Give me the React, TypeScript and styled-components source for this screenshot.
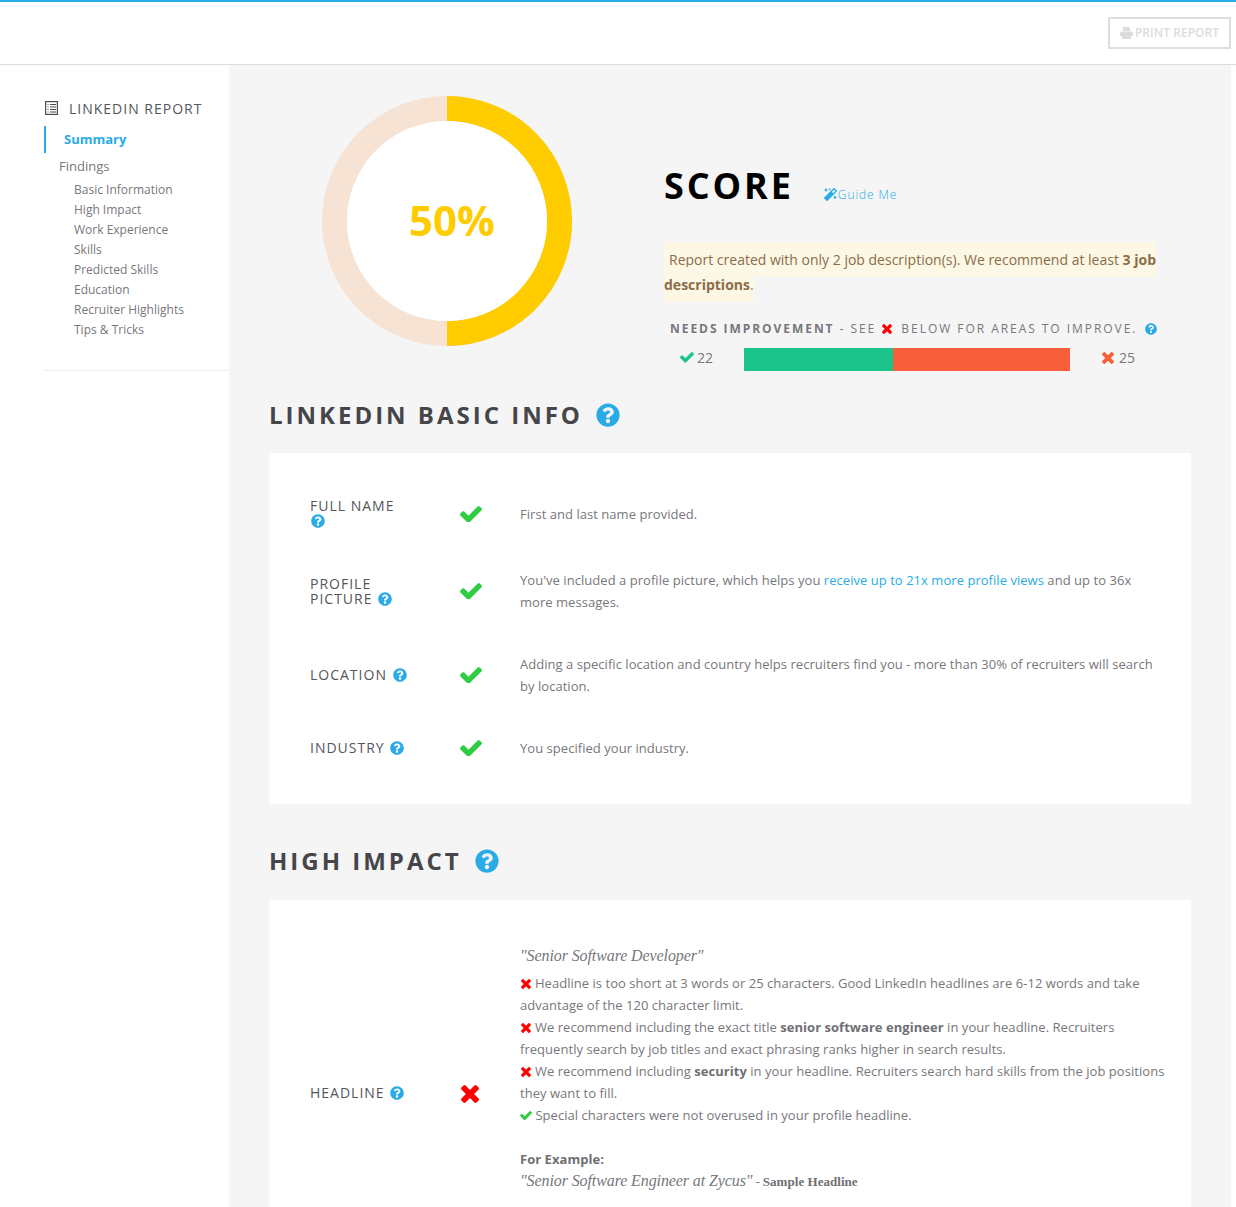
import React from "react";
import styled, { createGlobalStyle } from "styled-components";
import { FaQuestionCircle, FaMagic } from "react-icons/fa";

const GlobalStyle = createGlobalStyle`
  html, body {
    margin: 0;
    padding: 0;
    background: #fff;
  }
  body {
    font-family: "Open Sans", "Liberation Sans", sans-serif;
    color: #6f6f74;
  }
  * {
    box-sizing: border-box;
  }
`;

const Page = styled.div`
  width: 1236px;
  height: 1207px;
  overflow: hidden;
  border-top: 2px solid #29abe8;
`;

const TopBar = styled.div`
  height: 63px;
  border-bottom: 1px solid #dcdcdc;
  display: flex;
  justify-content: flex-end;
  align-items: flex-start;
  padding: 15px 5px 0 0;
`;

const PrintButton = styled.button`
  width: 123px;
  height: 32px;
  border: 2px solid #dedede;
  background: #fff;
  color: #dcdcdc;
  font-family: inherit;
  font-size: 12px;
  font-weight: 600;
  letter-spacing: 0.05px;
  display: flex;
  align-items: center;
  justify-content: center;
  gap: 2px;
  padding: 0 0 1px;
`;

const Body = styled.div`
  display: flex;
  width: 1236px;
`;

const Sidebar = styled.aside`
  width: 229px;
  flex: none;
  padding: 33px 0 0 44px;
`;

const SideTitle = styled.div`
  display: flex;
  align-items: center;
  gap: 11px;
  font-size: 14px;
  letter-spacing: 1px;
  color: #55555a;
  height: 20px;
  padding-left: 1px;
`;

const SideActive = styled.div`
  margin-top: 8px;
  height: 27px;
  border-left: 2px solid #29abe8;
  padding-left: 18px;
  font-size: 13px;
  font-weight: 700;
  color: #29abe8;
  line-height: 27px;
`;

const SideGroup = styled.div`
  margin-top: 3px;
  padding-left: 15px;
  font-size: 13px;
  line-height: 20px;
  color: #77777c;
`;

const SideList = styled.ul`
  list-style: none;
  margin: 4px 0 0;
  padding: 0 0 0 30px;
`;

const SideItem = styled.li`
  font-size: 12px;
  line-height: 20px;
  color: #77777c;
`;

const SideRule = styled.div`
  margin-top: 30px;
  border-top: 1px solid #eeeeee;
`;

const Main = styled.main`
  width: 1002px;
  flex: none;
  height: 1142px;
  overflow: hidden;
  background: #f5f5f5;
  padding: 31px 40px 0 40px;
`;

const ScoreRow = styled.section`
  display: flex;
  height: 304px;
`;

const Donut = styled.div`
  position: relative;
  width: 250px;
  height: 250px;
  margin-left: 53px;
  flex: none;
`;

const DonutLabel = styled.div`
  position: absolute;
  left: 5px;
  right: -5px;
  top: -1px;
  height: 250px;
  line-height: 250px;
  text-align: center;
  font-size: 42px;
  font-weight: 700;
  color: #ffcc00;
`;

const ScoreInfo = styled.div`
  margin-left: 92px;
  width: 495px;
`;

const ScoreHead = styled.div`
  display: flex;
  align-items: flex-end;
  margin-top: 65px;
`;

const ScoreTitle = styled.h2`
  margin: 0;
  font-size: 36px;
  line-height: 50px;
  font-weight: 700;
  letter-spacing: 2.9px;
  color: #000;
`;

const GuideLink = styled.a`
  margin: 0 0 8px 30px;
  font-size: 12px;
  font-weight: 300;
  letter-spacing: 0.9px;
  color: #29abe8;
  display: inline-flex;
  align-items: center;
  gap: 1px;
`;

const Notice = styled.p`
  margin: 36px 0 0;
  width: 494px;
  font-size: 14px;
  line-height: 25px;
  color: #8b6d47;
`;

const NoticeText = styled.span`
  background: #fdf7e6;
  padding: 8px 0;
`;

const NoticeLead = styled.span`
  display: inline-block;
  width: 5px;
`;

const NeedsLine = styled.div`
  margin-top: 22px;
  padding-left: 6px;
  font-size: 12px;
  line-height: 20px;
  letter-spacing: 1.95px;
  white-space: nowrap;
  color: #77777c;
  display: flex;
  align-items: center;
  b {
    font-weight: 700;
    letter-spacing: 1.95px;
  }
`;

const BarRow = styled.div`
  display: flex;
  align-items: center;
  margin-top: 9px;
  height: 23px;
`;

const BarCount = styled.div<{ $width: number; $pad: number; $gap: number }>`
  width: ${(p) => p.$width}px;
  padding: 0 0 4px ${(p) => p.$pad}px;
  font-size: 14px;
  color: #77777c;
  display: flex;
  align-items: center;
  gap: ${(p) => p.$gap}px;
  flex: none;
`;

const Bar = styled.div`
  display: flex;
  width: 326px;
  height: 23px;
  flex: none;
`;

const BarPart = styled.div<{ $color: string; $width: number }>`
  width: ${(p) => p.$width}px;
  background: ${(p) => p.$color};
`;

const SectionHead = styled.h3<{ $top: number }>`
  margin: ${(p) => p.$top}px 0 0;
  padding-bottom: 2px;
  display: flex;
  align-items: center;
  gap: 13px;
  font-size: 24px;
  line-height: 30px;
  font-weight: 700;
  letter-spacing: 3px;
  color: #45454a;
`;

const Card = styled.div<{ $gap: number; $top: number }>`
  margin-top: ${(p) => p.$gap}px;
  width: 922px;
  background: #fff;
  padding: ${(p) => p.$top}px 0 29px 41px;
`;

const Row = styled.div<{ $height: number }>`
  display: flex;
  align-items: center;
  height: ${(p) => p.$height}px;
`;

const RowLabel = styled.div<{ $lift?: number }>`
  width: 150px;
  flex: none;
  padding-bottom: ${(p) => p.$lift ?? 0}px;
  font-size: 14px;
  line-height: 15px;
  letter-spacing: 1px;
  color: #55555a;
  svg {
    vertical-align: -2px;
    margin-left: 1px;
  }
`;

const RowMark = styled.div<{ $pad?: number; $drop?: number }>`
  width: 60px;
  flex: none;
  display: flex;
  padding: ${(p) => p.$drop ?? 0}px 0 0 ${(p) => p.$pad ?? 0}px;
`;

const RowText = styled.div`
  flex: 1;
  padding-right: 25px;
  font-size: 13px;
  line-height: 22px;
  letter-spacing: 0.04px;
  color: #77777c;
  a {
    color: #29abe8;
  }
  b {
    font-weight: 700;
    color: #6f6f74;
  }
`;

const TopRowText = styled(RowText)`
  align-self: flex-start;
`;

const Quote = styled.div`
  font-family: "Liberation Serif", serif;
  font-style: italic;
  font-size: 16px;
  line-height: 22px;
  letter-spacing: -0.1px;
  color: #77777c;
  margin-bottom: 5px;
`;

const ExampleLine = styled.div`
  display: flex;
  align-items: baseline;
  gap: 3px;
  font-family: "Liberation Serif", serif;
  font-size: 13px;
  line-height: 22px;
  i {
    font-size: 16px;
    letter-spacing: -0.1px;
  }
  b {
    font-family: "Liberation Serif", serif;
  }
`;

const Spacer = styled.div`
  height: 22px;
`;

const InlineMark = styled.svg<{ $left?: number; $right?: number; $drop?: number }>`
  flex: none;
  vertical-align: ${(p) => p.$drop ?? -1}px;
  margin-left: ${(p) => p.$left ?? 0}px;
  margin-right: ${(p) => p.$right ?? 0}px;
`;

const HelpMark = styled(FaQuestionCircle)<{ $left?: number }>`
  flex: none;
  color: #29abe8;
  margin-left: ${(p) => p.$left ?? 0}px;
`;

type MarkProps = { size: number; color?: string; left?: number; right?: number };

// font-awesome 4 style check, cropped to the glyph
const Check = ({ size, color = "#2ecc40", left, right }: MarkProps) => (
  <InlineMark width={size} height={size * 0.766} viewBox="121 334 1550 1188" fill={color} $left={left} $right={right} $drop={0}>
    <path d="M1671 566q0 40-28 68l-724 724-136 136q-28 28-68 28t-68-28l-136-136-362-362q-28-28-28-68t28-68l136-136q28-28 68-28t68 28l294 295 656-657q28-28 68-28t68 28l136 136q28 28 28 68z" />
  </InlineMark>
);

const Cross = ({ size, color = "#ff0000", left, right }: MarkProps) => (
  <InlineMark width={size} height={size} viewBox="302 366 1188 1188" fill={color} $left={left} $right={right} $drop={-1}>
    <path d="M1490 1322q0 40-28 68l-136 136q-28 28-68 28t-68-28l-294-294-294 294q-28 28-68 28t-68-28l-136-136q-28-28-28-68t28-68l294-294-294-294q-28-28-28-68t28-68l136-136q28-28 68-28t68 28l294 294 294-294q28-28 68-28t68 28l136 136q28 28 28 68t-28 68l-294 294 294 294q28 28 28 68z" />
  </InlineMark>
);

const ReportIcon = () => (
  <svg width="13" height="14" viewBox="0 0 13 14" fill="none" stroke="#4a4a4f" strokeWidth="1.2">
    <rect x="0.6" y="0.6" width="11.8" height="12.8" />
    <path d="M2.5 3.5h1M5 3.5h6M2.5 6h1M5 6h6M2.5 8.5h1M5 8.5h6M2.5 11h1M5 11h6" />
  </svg>
);

const PrinterIcon = () => (
  <svg width="13" height="12" viewBox="0 0 13 12" fill="#dcdcdc">
    <path d="M3 0h6l1 1v3H3zM1 4.500h11l1 1V9h-2v3H2V9H0V5.500z" />
  </svg>
);

const navItems = [
  "Basic Information",
  "High Impact",
  "Work Experience",
  "Skills",
  "Predicted Skills",
  "Education",
  "Recruiter Highlights",
  "Tips & Tricks",
];

export default function App() {
  return (
    <Page>
      <GlobalStyle />
      <TopBar>
        <PrintButton>
          <PrinterIcon />
          PRINT REPORT
        </PrintButton>
      </TopBar>
      <Body>
        <Sidebar>
          <SideTitle>
            <ReportIcon />
            LINKEDIN REPORT
          </SideTitle>
          <SideActive>Summary</SideActive>
          <SideGroup>Findings</SideGroup>
          <SideList>
            {navItems.map((item) => (
              <SideItem key={item}>{item}</SideItem>
            ))}
          </SideList>
          <SideRule />
        </Sidebar>
        <Main>
          <ScoreRow>
            <Donut>
              <svg width="250" height="250" viewBox="0 0 250 250">
                <circle cx="125" cy="125" r="112.5" fill="none" stroke="#f7e3d3" strokeWidth="25" />
                <path d="M125 12.5 A112.5 112.5 0 0 1 125 237.5" fill="none" stroke="#ffcc00" strokeWidth="25" />
                <circle cx="125" cy="125" r="100" fill="#fff" />
              </svg>
              <DonutLabel>50%</DonutLabel>
            </Donut>
            <ScoreInfo>
              <ScoreHead>
                <ScoreTitle>SCORE</ScoreTitle>
                <GuideLink>
                  <FaMagic size={13} />
                  Guide Me
                </GuideLink>
              </ScoreHead>
              <Notice>
                <NoticeText>
                  <NoticeLead />
                  Report created with only 2 job description(s). We recommend at least <b>3 job descriptions</b>.
                </NoticeText>
              </Notice>
              <NeedsLine>
                <b>NEEDS IMPROVEMENT</b>&nbsp;- SEE&nbsp;
                <Cross size={10} left={1} right={4} />
                &nbsp;BELOW FOR AREAS TO IMPROVE.&nbsp;
                <HelpMark size={12} $left={3} />
              </NeedsLine>
              <BarRow>
                <BarCount $width={80} $pad={16} $gap={3}>
                  <Check size={14} color="#1bc48a" />
                  22
                </BarCount>
                <Bar>
                  <BarPart $color="#1bc48a" $width={149} />
                  <BarPart $color="#f75f3a" $width={177} />
                </Bar>
                <BarCount $width={80} $pad={32} $gap={5}>
                  <Cross size={12} color="#f75f3a" />
                  25
                </BarCount>
              </BarRow>
            </ScoreInfo>
          </ScoreRow>
          <SectionHead $top={0}>
            LINKEDIN BASIC INFO <HelpMark size={24} />
          </SectionHead>
          <Card $gap={21} $top={22}>
            <Row $height={78}>
              <RowLabel $lift={2}>
                FULL NAME
                <br />
                <HelpMark size={14} />
              </RowLabel>
              <RowMark>
                <Check size={22} />
              </RowMark>
              <RowText>First and last name provided.</RowText>
            </Row>
            <Row $height={76}>
              <RowLabel>
                PROFILE
                <br />
                PICTURE <HelpMark size={14} />
              </RowLabel>
              <RowMark>
                <Check size={22} />
              </RowMark>
              <RowText>
                You've included a profile picture, which helps you <a>receive up to 21x more profile views</a> and up to 36x more messages.
              </RowText>
            </Row>
            <Row $height={92}>
              <RowLabel $lift={2}>
                LOCATION <HelpMark size={14} />
              </RowLabel>
              <RowMark>
                <Check size={22} />
              </RowMark>
              <RowText>
                Adding a specific location and country helps recruiters find you - more than 30% of recruiters will search by location.
              </RowText>
            </Row>
            <Row $height={54}>
              <RowLabel $lift={2}>
                INDUSTRY <HelpMark size={14} />
              </RowLabel>
              <RowMark>
                <Check size={22} />
              </RowMark>
              <RowText>You specified your industry.</RowText>
            </Row>
          </Card>
          <SectionHead $top={42}>
            HIGH IMPACT <HelpMark size={24} />
          </SectionHead>
          <Card $gap={22} $top={45}>
            <Row $height={294}>
              <RowLabel>
                HEADLINE <HelpMark size={14} />
              </RowLabel>
              <RowMark $pad={1} $drop={4}>
                <Cross size={18} />
              </RowMark>
              <TopRowText>
                <Quote>"Senior Software Developer"</Quote>
                <Cross size={10} left={1} right={0.5} /> Headline is too short at 3 words or 25 characters. Good LinkedIn headlines are 6-12 words and take advantage of the 120 character limit.
                <br />
                <Cross size={10} left={1} right={0.5} /> We recommend including the exact title <b>senior software engineer</b> in your headline. Recruiters frequently search by job titles and exact phrasing ranks higher in search results.
                <br />
                <Cross size={10} left={1} right={0.5} /> We recommend including <b>security</b> in your headline. Recruiters search hard skills from the job positions they want to fill.
                <br />
                <Check size={12} /> Special characters were not overused in your profile headline.
                <Spacer />
                <b>For Example:</b>
                <ExampleLine>
                  <i>"Senior Software Engineer at Zycus"</i> - <b>Sample Headline</b>
                </ExampleLine>
              </TopRowText>
            </Row>
          </Card>
        </Main>
      </Body>
    </Page>
  );
}
